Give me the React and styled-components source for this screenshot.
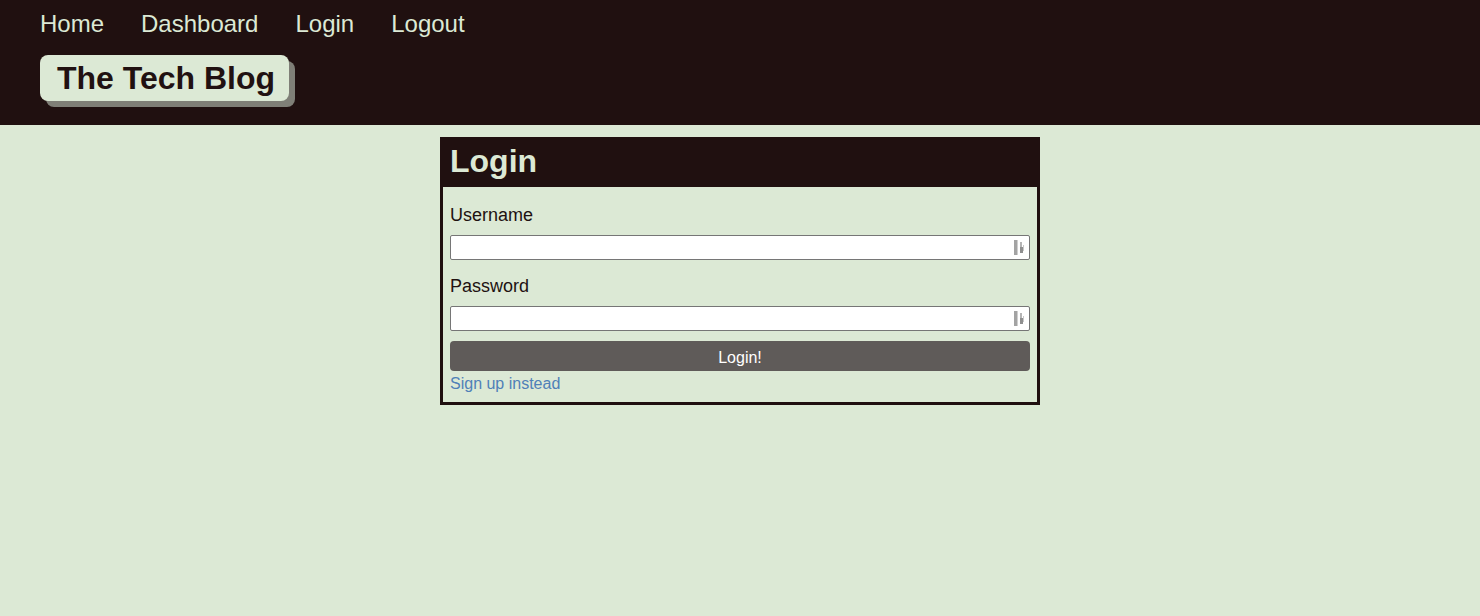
import styled, { createGlobalStyle } from "styled-components";

const GlobalStyle = createGlobalStyle`
  body {
    margin: 0;
    background-color: #dce9d5;
    font-family: "Liberation Sans", Arial, sans-serif;
    color: #211111;
  }
`;

const FieldIcon = () => (
  <svg width="11" height="15" viewBox="0 0 11 15">
    <rect x="0" y="0" width="3" height="15" fill="#a3a3a3" />
    <rect x="3" y="0" width="1" height="15" fill="#cfcfcf" />
    <rect x="6" y="2" width="2" height="5" fill="#b5b5b5" />
    <rect x="6" y="7" width="3" height="6" fill="#8f8f8f" />
    <rect x="9" y="5" width="1" height="6" fill="#c8c8c8" />
  </svg>
);

const App = () => {
  return (
    <>
      <GlobalStyle />
      <Header>
        <Nav>
          <NavLink href="#">Home</NavLink>
          <NavLink href="#">Dashboard</NavLink>
          <NavLink href="#">Login</NavLink>
          <NavLink href="#">Logout</NavLink>
        </Nav>
        <Logo>The Tech Blog</Logo>
      </Header>

      <Main>
        <Card>
          <CardTitle>Login</CardTitle>
          <Form onSubmit={e => e.preventDefault()}>
            <Label htmlFor="username">Username</Label>
            <InputWrap>
              <Input id="username" type="text" />
              <IconSlot>
                <FieldIcon />
              </IconSlot>
            </InputWrap>
            <Label htmlFor="password" $spaced>
              Password
            </Label>
            <InputWrap>
              <Input id="password" type="password" />
              <IconSlot>
                <FieldIcon />
              </IconSlot>
            </InputWrap>
            <Button type="submit">Login!</Button>
            <SignUp href="#">Sign up instead</SignUp>
          </Form>
        </Card>
      </Main>
    </>
  );
};

export default App;

/* ---------------------------- Styled Components --------------------------- */

const Header = styled.header`
  background-color: #201010;
  height: 125px;
  box-sizing: border-box;
  padding: 8px 40px 0;
  display: flex;
  flex-direction: column;
  align-items: flex-start;
`;

const Nav = styled.nav`
  display: flex;
  gap: 37px;
`;

const NavLink = styled.a`
  color: #dce9d5;
  text-decoration: none;
  font-size: 24px;
  line-height: 32px;
`;

const Logo = styled.h1`
  margin: 15px 0 0;
  background-color: #dce9d5;
  color: #211111;
  font-size: 32px;
  font-weight: bold;
  height: 46px;
  line-height: 46px;
  padding: 0 14px 0 17px;
  border-radius: 8px;
  box-shadow: 6px 6px 0 #7f7f77;
`;

const Main = styled.main`
  display: flex;
  justify-content: center;
  padding-top: 12px;
`;

const Card = styled.section`
  width: 600px;
  box-sizing: border-box;
  border: 3px solid #201010;
`;

const CardTitle = styled.h2`
  margin: 0;
  background-color: #201010;
  color: #dce9d5;
  font-size: 32px;
  font-weight: bold;
  height: 47px;
  line-height: 43px;
  padding: 0 7px 4px;
  box-sizing: border-box;
`;

const Form = styled.form`
  display: flex;
  flex-direction: column;
  padding: 17px 7px 9px;
`;

const Label = styled.label`
  font-size: 18px;
  line-height: 22px;
  margin-top: ${p => (p.$spaced ? "15px" : "0")};
  margin-bottom: 9px;
`;

const InputWrap = styled.div`
  position: relative;
`;

const Input = styled.input`
  display: block;
  width: 100%;
  box-sizing: border-box;
  height: 25px;
  border: 1px solid #767676;
  border-radius: 2px;
  background: #fff;
  padding: 0 24px 0 4px;
  font-size: 14px;
`;

const IconSlot = styled.span`
  position: absolute;
  right: 5px;
  top: 5px;
  display: flex;
`;

const Button = styled.button`
  margin-top: 10px;
  height: 30px;
  border: none;
  border-radius: 4px;
  background-color: #5f5b59;
  color: #fff;
  font-family: "Liberation Sans", Arial, sans-serif;
  font-size: 16px;
  line-height: 30px;
  padding: 2px 0 0;
`;

const SignUp = styled.a`
  margin-top: 4px;
  color: #4f80b8;
  text-decoration: none;
  font-size: 16px;
  line-height: 18px;
`;
